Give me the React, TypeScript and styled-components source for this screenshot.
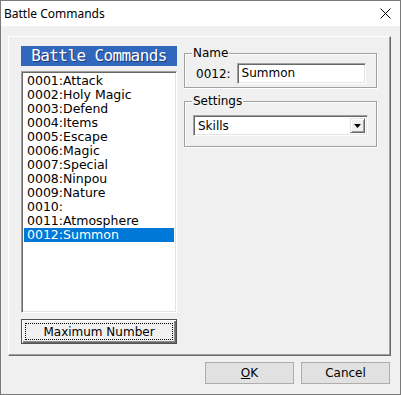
import React from "react";
import styled, { createGlobalStyle } from "styled-components";

const Global = createGlobalStyle`
  html, body { margin: 0; padding: 0; background: #f0f0f0; }
  * { box-sizing: border-box; }
`;

const Window = styled.div`
  width: 401px;
  height: 395px;
  border: 1px solid #7a7a7a;
  background: #f0f0f0;
  display: flex;
  flex-direction: column;
  font-family: "DejaVu Sans", sans-serif;
  color: #000;
`;

const TitleBar = styled.div`
  height: 25px;
  background: #fff;
  display: flex;
  align-items: center;
  justify-content: space-between;
  padding: 0 9px 0 3px;
  font-family: "Noto Sans", sans-serif;
  font-size: 12px;
`;

const Client = styled.div`
  flex: 1;
  display: flex;
  flex-direction: column;
  padding: 10px 9px 0 7px;
`;

const Panel = styled.div`
  height: 320px;
  display: flex;
  gap: 7px;
  padding: 9px 14px 0 12px;
  border-top: 1px solid #fff;
  border-left: 1px solid #fff;
  border-right: 1px solid #696969;
  border-bottom: 1px solid #696969;
  box-shadow: inset -1px -1px 0 #a0a0a0;
`;

const LeftCol = styled.div`
  width: 156px;
  display: flex;
  flex-direction: column;
`;

const Header = styled.div`
  height: 20px;
  background: #3168bd;
  color: #fff;
  font-family: "DejaVu Sans Mono", monospace;
  font-size: 16px;
  letter-spacing: -0.6px;
  line-height: 20px;
  text-align: center;
  text-shadow: 1px 1px 0 #1b3770;
`;

const List = styled.div`
  margin-top: 5px;
  height: 242px;
  background: #fff;
  border-top: 1px solid #a0a0a0;
  border-left: 1px solid #a0a0a0;
  border-right: 1px solid #fff;
  border-bottom: 1px solid #fff;
  box-shadow: inset 1px 1px 0 #696969, inset -1px -1px 0 #e3e3e3;
  padding: 2px 2px 0 2px;
  display: flex;
  flex-direction: column;
`;

const Row = styled.div<{ $sel?: boolean }>`
  height: 14px;
  line-height: 14px;
  font-size: 12.5px;
  padding-left: 3px;
  white-space: nowrap;
  background: ${(p) => (p.$sel ? "#0078d7" : "transparent")};
  color: ${(p) => (p.$sel ? "#fff" : "#000")};
`;

const MaxButton = styled.button`
  margin-top: 6px;
  height: 25px;
  width: 156px;
  padding: 3px;
  background: #f0f0f0;
  border: 1px solid #505050;
  box-shadow: inset 1px 1px 0 #fff, inset -1px -1px 0 #6b6b6b, inset -2px -2px 0 #8a8a8a;
  font-family: "DejaVu Sans", sans-serif;
  font-size: 12px;
  color: #000;
  display: flex;
`;

const Focus = styled.span`
  flex: 1;
  border: 1px dotted #000;
  display: flex;
  align-items: center;
  justify-content: center;
  line-height: 14px;
`;

const RightCol = styled.div`
  width: 193px;
  padding-top: 7px;
  display: flex;
  flex-direction: column;
  gap: 13px;
`;

const Group = styled.div<{ $h: number }>`
  height: ${(p) => p.$h}px;
  border: 1px solid #a0a0a0;
  box-shadow: inset 1px 1px 0 #fff, 1px 1px 0 #fff;
  padding: 0 8px 0 8px;
  display: flex;
  flex-direction: column;
`;

const GroupTitle = styled.div`
  margin: -8px 0 0 -1px;
  width: fit-content;
  background: #f0f0f0;
  padding: 0 1px;
  font-size: 12px;
  line-height: 14px;
`;

const NameRow = styled.div`
  margin-top: 3px;
  display: flex;
  align-items: center;
  gap: 6px;
  padding-left: 3px;
  font-size: 12px;
`;

const TextBox = styled.div`
  width: 129px;
  height: 21px;
  background: #fff;
  border-top: 1px solid #a0a0a0;
  border-left: 1px solid #a0a0a0;
  border-right: 1px solid #fff;
  border-bottom: 1px solid #fff;
  box-shadow: inset 1px 1px 0 #696969, inset -1px -1px 0 #e3e3e3;
  padding-left: 4px;
  font-size: 12px;
  line-height: 19px;
`;

const Combo = styled.div`
  margin-top: 7px;
  width: 175px;
  height: 21px;
  background: #fff;
  border-top: 1px solid #a0a0a0;
  border-left: 1px solid #a0a0a0;
  border-right: 1px solid #fff;
  border-bottom: 1px solid #fff;
  box-shadow: inset 1px 1px 0 #696969, inset -1px -1px 0 #e3e3e3;
  padding: 2px 2px 2px 4px;
  display: flex;
  align-items: center;
  justify-content: space-between;
  font-size: 12px;
`;

const ComboArrow = styled.div`
  width: 15px;
  height: 15px;
  background: #f0f0f0;
  border-top: 1px solid #e3e3e3;
  border-left: 1px solid #e3e3e3;
  border-right: 1px solid #696969;
  border-bottom: 1px solid #696969;
  box-shadow: inset 1px 1px 0 #fff, inset -1px -1px 0 #a0a0a0;
  display: flex;
  align-items: center;
  justify-content: center;
`;

const ButtonRow = styled.div`
  display: flex;
  justify-content: flex-end;
  gap: 7px;
  margin-top: 6px;
  padding-right: 1px;
`;

const DlgButton = styled.button`
  width: 89px;
  height: 22px;
  background: #e1e1e1;
  border: 1px solid #adadad;
  font-family: "DejaVu Sans", sans-serif;
  font-size: 12px;
  color: #000;
  padding: 0;
  u { text-decoration: underline; }
`;

const items = [
  "0001:Attack",
  "0002:Holy Magic",
  "0003:Defend",
  "0004:Items",
  "0005:Escape",
  "0006:Magic",
  "0007:Special",
  "0008:Ninpou",
  "0009:Nature",
  "0010:",
  "0011:Atmosphere",
  "0012:Summon",
];

export default function App() {
  return (
    <>
      <Global />
      <Window>
        <TitleBar>
          <span>Battle Commands</span>
          <svg width="11" height="11" viewBox="0 0 11 11">
            <path d="M0.5 0.5 L10.5 10.5 M10.5 0.5 L0.5 10.5" stroke="#000" strokeWidth="1" />
          </svg>
        </TitleBar>
        <Client>
          <Panel>
            <LeftCol>
              <Header>Battle Commands</Header>
              <List>
                {items.map((t, i) => (
                  <Row key={t} $sel={i === items.length - 1}>
                    {t}
                  </Row>
                ))}
              </List>
              <MaxButton>
                <Focus>Maximum Number</Focus>
              </MaxButton>
            </LeftCol>
            <RightCol>
              <Group $h={35}>
                <GroupTitle>Name</GroupTitle>
                <NameRow>
                  <span>0012:</span>
                  <TextBox>Summon</TextBox>
                </NameRow>
              </Group>
              <Group $h={46}>
                <GroupTitle>Settings</GroupTitle>
                <Combo>
                  <span>Skills</span>
                  <ComboArrow>
                    <svg width="7" height="4" viewBox="0 0 7 4">
                      <path d="M0 0 H7 L3.5 4 Z" fill="#000" />
                    </svg>
                  </ComboArrow>
                </Combo>
              </Group>
            </RightCol>
          </Panel>
          <ButtonRow>
            <DlgButton>
              <u>O</u>K
            </DlgButton>
            <DlgButton>Cancel</DlgButton>
          </ButtonRow>
        </Client>
      </Window>
    </>
  );
}
